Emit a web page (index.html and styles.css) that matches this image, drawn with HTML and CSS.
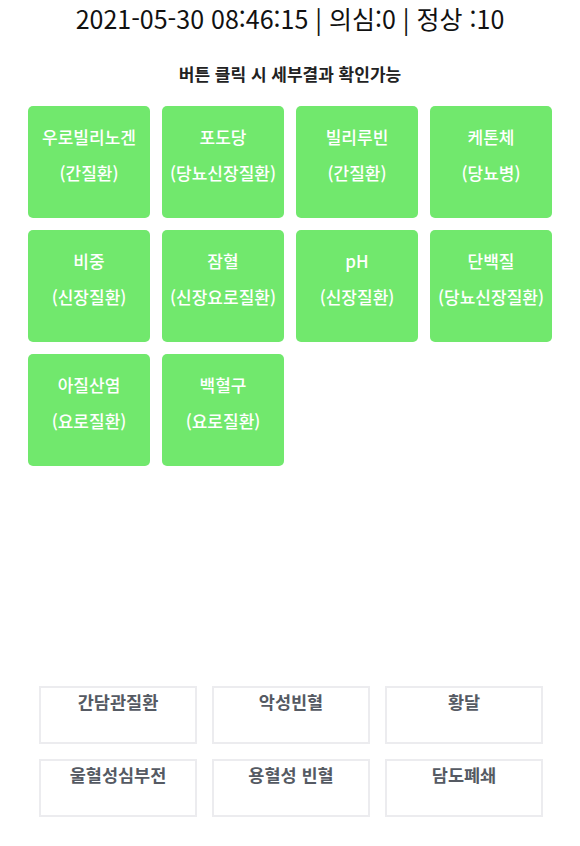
FILE: index.html
```html
<!DOCTYPE html>
<html lang="ko">
<head>
  <meta charset="UTF-8" />
  <meta name="viewport" content="width=device-width, initial-scale=1.0"/>
  <title>검사 결과</title>
  <link rel="stylesheet" href="styles.css">
</head>
<body>
  <div class="container">
    <h2 class="status">2021-05-30 08:46:15 | 의심:0 | 정상 :10</h2>

    <p class="guide">버튼 클릭 시 세부결과 확인가능</p>

    <div class="items">
      <button class="item"><span>우로빌리노겐</span><span>(간질환)</span></button>
      <button class="item"><span>포도당</span><span>(당뇨신장질환)</span></button>
      <button class="item"><span>빌리루빈</span><span>(간질환)</span></button>
      <button class="item"><span>케톤체</span><span>(당뇨병)</span></button>
      <button class="item"><span>비중</span><span>(신장질환)</span></button>
      <button class="item"><span>잠혈</span><span>(신장요로질환)</span></button>
      <button class="item"><span>pH</span><span>(신장질환)</span></button>
      <button class="item"><span>단백질</span><span>(당뇨신장질환)</span></button>
      <button class="item"><span>아질산염</span><span>(요로질환)</span></button>
      <button class="item"><span>백혈구</span><span>(요로질환)</span></button>
    </div>

    <div class="diseases">
      <div class="disease">간담관질환</div>
      <div class="disease">악성빈혈</div>
      <div class="disease">황달</div>
      <div class="disease">울혈성심부전</div>
      <div class="disease">용혈성 빈혈</div>
      <div class="disease">담도폐쇄</div>
    </div>
  </div>
</body>
</html>
```

FILE: styles.css
```css
* {
  box-sizing: border-box;
  margin: 0;
  padding: 0;
  font-family: "Noto Sans CJK KR", "Noto Sans", sans-serif;
}

body {
  background: #ffffff;
  width: 580px;
  min-height: 846px;
}

.status {
  font-size: 25px;
  font-weight: 400;
  line-height: 36px;
  color: #111;
  text-align: center;
}

.guide {
  margin-top: 26px;
  font-size: 17px;
  font-weight: 700;
  line-height: 24px;
  color: #222;
  text-align: center;
}

.items {
  display: grid;
  grid-template-columns: repeat(4, 122px);
  grid-auto-rows: 112px;
  gap: 12px;
  margin: 20px 28px 0;
}

.item {
  display: flex;
  flex-direction: column;
  align-items: center;
  padding-top: 13px;
  background: #71e86d;
  border: none;
  border-radius: 5px;
  color: #fff;
  font-size: 17px;
  font-weight: 500;
  line-height: 36px;
  cursor: pointer;
}

.diseases {
  display: grid;
  grid-template-columns: repeat(3, 158px);
  grid-auto-rows: 58px;
  gap: 15px;
  margin: 220px 37px 0 39px;
}

.disease {
  padding-top: 2px;
  border: 2px solid #ececef;
  color: #555a63;
  font-size: 17.5px;
  font-weight: 700;
  line-height: 24px;
  text-align: center;
}
```
